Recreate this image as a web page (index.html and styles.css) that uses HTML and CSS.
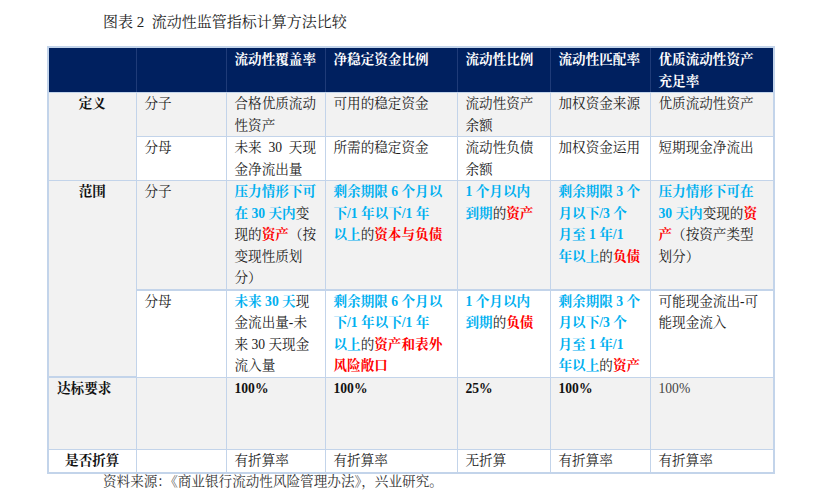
FILE: index.html
```html
<!DOCTYPE html>
<html lang="zh-CN">
<head>
<meta charset="utf-8">
<title>图表 2 流动性监管指标计算方法比较</title>
<link rel="stylesheet" href="styles.css">
</head>
<body>
<div class="page">
  <div class="title">图表 2&nbsp; 流动性监管指标计算方法比较</div>
  <table class="grid">
    <colgroup>
      <col class="c1"><col class="c2"><col class="c3"><col class="c4"><col class="c5"><col class="c6"><col class="c7">
    </colgroup>
    <thead>
      <tr class="head">
        <th></th>
        <th></th>
        <th>流动性覆盖率</th>
        <th>净稳定资金比例</th>
        <th>流动性比例</th>
        <th>流动性匹配率</th>
        <th>优质流动性资产<br>充足率</th>
      </tr>
    </thead>
    <tbody>
      <tr class="gray">
        <td class="cat center" rowspan="2">定义</td>
        <td>分子</td>
        <td>合格优质流动<br>性资产</td>
        <td>可用的稳定资金</td>
        <td>流动性资产<br>余额</td>
        <td>加权资金来源</td>
        <td>优质流动性资产</td>
      </tr>
      <tr class="white">
        <td>分母</td>
        <td>未来&nbsp; 30&nbsp; 天现<br>金净流出量</td>
        <td>所需的稳定资金</td>
        <td>流动性负债<br>余额</td>
        <td>加权资金运用</td>
        <td>短期现金净流出</td>
      </tr>
      <tr class="gray split">
        <td class="cat center" rowspan="2">范围</td>
        <td>分子</td>
        <td><span class="b">压力情形下可</span><br><span class="b">在 30 天内</span>变<br>现的<span class="r">资产</span>（按<br>变现性质划<br>分）</td>
        <td><span class="b">剩余期限 6 个月以</span><br><span class="b">下/1 年以下/1 年</span><br><span class="b">以上</span>的<span class="r">资本与负债</span></td>
        <td><span class="b">1 个月以内</span><br><span class="b">到期</span>的<span class="r">资产</span></td>
        <td><span class="b">剩余期限 3 个</span><br><span class="b">月以下/3 个</span><br><span class="b">月至 1 年/1</span><br><span class="b">年以上</span>的<span class="r">负债</span></td>
        <td><span class="b">压力情形下可在</span><br><span class="b">30 天内</span>变现的<span class="r">资</span><br><span class="r">产</span>（按资产类型<br>划分）</td>
      </tr>
      <tr class="white">
        <td>分母</td>
        <td><span class="b">未来 30 天</span>现<br>金流出量-未<br>来 30 天现金<br>流入量</td>
        <td><span class="b">剩余期限 6 个月以</span><br><span class="b">下/1 年以下/1 年</span><br><span class="b">以上</span>的<span class="r">资产和表外</span><br><span class="r">风险敞口</span></td>
        <td><span class="b">1 个月以内</span><br><span class="b">到期</span>的<span class="r">负债</span></td>
        <td><span class="b">剩余期限 3 个</span><br><span class="b">月以下/3 个</span><br><span class="b">月至 1 年/1</span><br><span class="b">年以上</span>的<span class="r">资产</span></td>
        <td>可能现金流出-可<br>能现金流入</td>
      </tr>
      <tr class="gray tall">
        <td class="cat">达标要求</td>
        <td></td>
        <td class="num">100%</td>
        <td class="num">100%</td>
        <td class="num">25%</td>
        <td class="num">100%</td>
        <td class="num light">100%</td>
      </tr>
      <tr class="white">
        <td class="cat center">是否折算</td>
        <td></td>
        <td>有折算率</td>
        <td>有折算率</td>
        <td>无折算</td>
        <td>有折算率</td>
        <td>有折算率</td>
      </tr>
    </tbody>
  </table>
  <div class="source">资料来源：《商业银行流动性风险管理办法》，兴业研究。</div>
</div>
</body>
</html>
```

FILE: styles.css
```css
html, body {
  margin: 0;
  padding: 0;
  background: #ffffff;
}

body {
  font-family: "Liberation Serif", "Noto Serif CJK SC", "Noto Sans CJK SC", serif;
  color: #1a1a1a;
}

.page {
  padding: 12px 0 0 47px;
  width: 726px;
}

.title {
  font-size: 15px;
  line-height: 20px;
  height: 20px;
  margin-left: 56px;
  color: #222222;
}

.grid {
  margin-top: 14px;
  width: 726px;
  table-layout: fixed;
  border-collapse: collapse;
  border: 2px solid #c3d4ea;
  font-size: 13.6px;
  line-height: 21.5px;
}

.c1 { width: 88px; }
.c2 { width: 90px; }
.c3 { width: 99px; }
.c4 { width: 132px; }
.c5 { width: 93px; }
.c6 { width: 100px; }
.c7 { width: 124px; }

.grid th,
.grid td {
  padding: 0 6px 0 8px;
  vertical-align: top;
  text-align: left;
  border: 1px solid #c3d4ea;
  font-weight: normal;
}

.head th {
  background: #00205f;
  color: #ffffff;
  font-weight: bold;
  height: 41px;
  padding-top: 1px;
  border-color: #1f3b78;
  border-bottom-color: #c3d4ea;
}

.gray td {
  background: #f2f2f2;
}

.white td {
  background: #ffffff;
}

.split td {
  border-bottom: 2px solid #c3d4ea;
}

.grid td.cat {
  background: #f2f2f2;
  font-weight: bold;
  color: #111111;
}

.white td.cat {
  background: #ffffff;
}

.grid td.center {
  text-align: center;
  padding-left: 0;
  padding-right: 0;
}

.tall td {
  height: 71px;
}

.b {
  color: #00b0f0;
  font-weight: bold;
}

.r {
  color: #ff0000;
  font-weight: bold;
}

.grid td.num {
  font-weight: bold;
  color: #111111;
}

.grid td.light {
  font-weight: normal;
  color: #444444;
}

.source {
  margin-left: 56px;
  font-size: 13.6px;
  line-height: 16px;
  color: #333333;
}
```
